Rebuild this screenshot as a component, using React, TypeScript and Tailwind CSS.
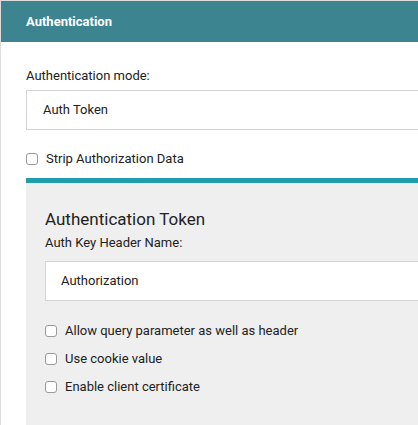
import React from "react";

function Box() {
  return (
    <span className="inline-block w-[12px] h-[12px] rounded-[3px] border border-[#9a9a9a] bg-white shrink-0" />
  );
}

function Check({ label }: { label: string }) {
  return (
    <div className="flex items-center h-[28px]">
      <Box />
      <span className="ml-[8px] text-[13px] text-[#222]">{label}</span>
    </div>
  );
}

export default function App() {
  return (
    <div
      className="w-[418px] h-[425px] overflow-hidden bg-white"
      style={{ fontFamily: "Roboto, 'Liberation Sans', sans-serif" }}
    >
      <div className="w-[480px] h-[440px] border-l border-t border-[#dcdcdc]">
        <div className="h-[41px] bg-[#3b8490] flex items-center pl-[25px]">
          <span className="text-white text-[13px] font-bold">Authentication</span>
        </div>
        <div className="pl-[25px]">
          <div className="pt-[25px] text-[13px] text-[#222] leading-[17px]">Authentication mode:</div>
          <div className="mt-[6px] h-[40px] border border-[#d4d4d4] bg-white flex items-center pl-[16px] text-[13px] text-[#222]">
            Auth Token
          </div>
          <div className="flex items-center h-[28px] mt-[15px]">
            <Box />
            <span className="ml-[8px] text-[13px] text-[#222]">Strip Authorization Data</span>
          </div>
          <div className="mt-[5px] h-[5px] bg-[#1f9eab]" />
          <div className="bg-[#efefef] h-[300px] pl-[19px] pt-[25px]">
            <div className="text-[17px] text-[#222] leading-[22px]">Authentication Token</div>
            <div className="mt-[4px] text-[13px] text-[#222] leading-[17px]">Auth Key Header Name:</div>
            <div className="mt-[10px] h-[40px] border border-[#d4d4d4] bg-white flex items-center pl-[15px] text-[13px] text-[#222]">
              Authorization
            </div>
            <div className="mt-[16px]">
              <Check label="Allow query parameter as well as header" />
              <Check label="Use cookie value" />
              <Check label="Enable client certificate" />
            </div>
          </div>
        </div>
      </div>
    </div>
  );
}
